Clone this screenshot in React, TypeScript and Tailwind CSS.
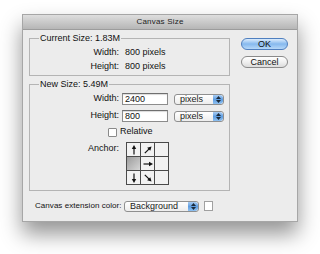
import React from 'react';

const font = { fontFamily: '"Liberation Sans", Arial, sans-serif' };

function Arrow({ dir }: { dir: 'n' | 'ne' | 'e' | 's' | 'se' }) {
  const rot = { n: -90, ne: -45, e: 0, s: 90, se: 45 }[dir];
  return (
    <svg width="12" height="12" viewBox="0 0 12 12">
      <g transform={`rotate(${rot} 6 6)`}>
        <line x1="1.5" y1="6" x2="8" y2="6" stroke="#111" strokeWidth="1.2" />
        <polygon points="11,6 7,3.8 7,8.2" fill="#111" />
      </g>
    </svg>
  );
}

function Stepper() {
  return (
    <div className="w-[10px] h-full rounded-r-[3px] bg-gradient-to-b from-[#a9cdf3] via-[#5f9de0] to-[#8fc1f1] flex flex-col items-center justify-center gap-[1px]">
      <svg width="5" height="3" viewBox="0 0 5 3"><polygon points="2.5,0 5,3 0,3" fill="#1b2a3a" /></svg>
      <svg width="5" height="3" viewBox="0 0 5 3"><polygon points="0,0 5,0 2.5,3" fill="#1b2a3a" /></svg>
    </div>
  );
}

function Popup({ label, width }: { label: string; width: string }) {
  return (
    <div className={`${width} h-[11px] flex border border-[#8f8f8f] rounded-[3px] bg-gradient-to-b from-white to-[#ededed] overflow-hidden`}>
      <div className="flex-1 pl-[5px] text-[9px] leading-[9px] text-[#1a1a1a] whitespace-nowrap">{label}</div>
      <Stepper />
    </div>
  );
}

function Group({ title, className, children }: { title: string; className: string; children: React.ReactNode }) {
  return (
    <div className={`relative border border-[#b4b4b4] ${className}`}>
      <span className="absolute -top-[6px] left-[9px] px-[1px] bg-[#ececec] text-[9px] leading-[10px] whitespace-nowrap">{title}</span>
      {children}
    </div>
  );
}

export default function App() {
  const cells: (null | 'n' | 'ne' | 'e' | 's' | 'se' | 'anchor')[] = ['n', 'ne', null, 'anchor', 'e', null, 's', 'se', null];
  return (
    <div className="w-[320px] h-[254px] bg-white pt-[14px] pl-[22px] text-[#111]" style={font}>
      <div className="w-[276px] h-[208px] bg-[#ececec] border border-[#a6a6a6] shadow-[0_12px_20px_rgba(0,0,0,0.42)] flex flex-col">
        <div className="h-[15px] shrink-0 bg-gradient-to-b from-[#dedede] to-[#b6b6b6] border-b border-[#9c9c9c] flex items-center justify-center text-[8px] tracking-[0.2px] text-[#222]">
          Canvas Size
        </div>
        <div className="flex pl-[6px] pt-[8px]">
          <div className="w-[201px] flex flex-col">
            <Group title="Current Size: 1.83M" className="h-[38px] pt-[7px]">
              {[['Width:', '800 pixels'], ['Height:', '800 pixels']].map(([k, v]) => (
                <div key={k} className="h-[14px] flex items-center text-[9px]">
                  <span className="w-[89px] text-right">{k}</span>
                  <span className="ml-[6px]">{v}</span>
                </div>
              ))}
            </Group>
            <Group title="New Size: 5.49M" className="mt-[8px] h-[107px] pt-[8px] flex flex-col">
              {[['Width:', '2400'], ['Height:', '800']].map(([k, v], i) => (
                <div key={k} className={`h-[12px] flex items-center text-[9px] ${i ? 'mt-[5px]' : ''}`}>
                  <span className="w-[89px] text-right">{k}</span>
                  <div className="ml-[3px] w-[46px] h-[12px] bg-white border border-[#8c8c8c] border-t-[#6f6f6f] pl-[2px] leading-[10px] shadow-[inset_0_1px_1px_rgba(0,0,0,0.15)]">{v}</div>
                  <div className="ml-[6px] pt-[1px]"><Popup label="pixels" width="w-[50px]" /></div>
                </div>
              ))}
              <div className="mt-[5px] h-[10px] flex items-center pl-[78px] text-[9px]">
                <div className="w-[9px] h-[9px] bg-white border border-[#8a8a8a] rounded-[1px]" />
                <span className="ml-[3px]">Relative</span>
              </div>
              <div className="mt-[5px] flex text-[9px]">
                <span className="w-[89px] text-right leading-[10px] pt-[1px]">Anchor:</span>
                <div className="ml-[7px] grid grid-cols-3 border-l border-t border-[#4a4a4a] bg-[#f2f2f2]">
                  {cells.map((c, i) => (
                    <div
                      key={i}
                      className={`w-[14px] h-[14px] border-r border-b border-[#4a4a4a] flex items-center justify-center ${c === 'anchor' ? 'bg-gradient-to-br from-[#9c9c9c] to-[#d6d6d6]' : ''}`}
                    >
                      {c && c !== 'anchor' && <Arrow dir={c} />}
                    </div>
                  ))}
                </div>
              </div>
            </Group>
            <div className="mt-[9px] flex items-center">
              <span className="ml-[6px] w-[84px] whitespace-nowrap text-[8px] tracking-[0.05px]">Canvas extension color:</span>
              <div className="ml-[5px]"><Popup label="Background" width="w-[75px]" /></div>
              <div className="ml-[5px] w-[9px] h-[10px] bg-white border border-[#a0a0a0]" />
            </div>
          </div>
          <div className="ml-[11px] flex flex-col">
            <button className="w-[47px] h-[12px] rounded-full border border-[#4f7fbf] bg-gradient-to-b from-[#dcecfc] via-[#86b9ee] to-[#b7d8f8] text-[9px] leading-[10px] text-[#111]">
              OK
            </button>
            <button className="mt-[6px] w-[47px] h-[12px] rounded-full border border-[#8a8a8a] bg-gradient-to-b from-white via-[#f0f0f0] to-[#dcdcdc] text-[9px] leading-[10px] text-[#111]">
              Cancel
            </button>
          </div>
        </div>
      </div>
    </div>
  );
}
